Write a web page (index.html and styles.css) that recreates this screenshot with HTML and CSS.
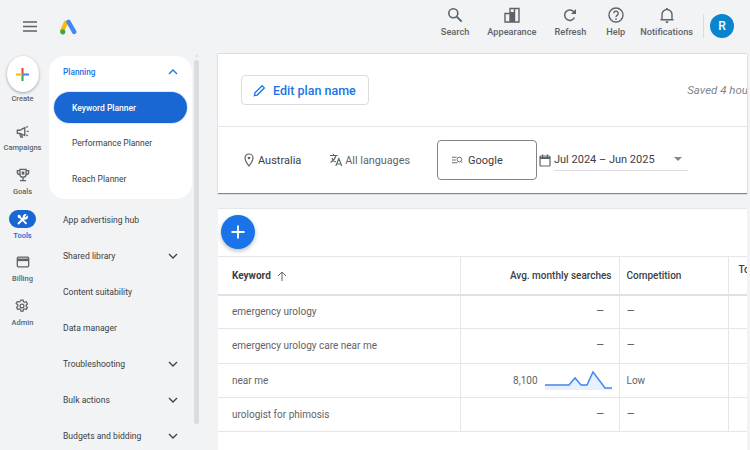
FILE: index.html
```html
<!DOCTYPE html>
<html lang="en">
<head>
<meta charset="utf-8">
<title>Keyword Planner</title>
<link rel="stylesheet" href="styles.css">
</head>
<body>
<div class="app">
  <header class="topbar">
    <div class="brand">
      <svg class="menu" viewBox="0 0 14 11" aria-hidden="true"><path d="M0 1h14M0 5.500h14M0 10h14" stroke="#5f6368" stroke-width="1.300" fill="none"/></svg>
      <svg class="logo" viewBox="0 0 20 18" aria-hidden="true">
        <path d="M7 4 2.500 13.500" stroke="#fbbc04" stroke-width="5" stroke-linecap="round"/>
        <path d="M10 3 16.700 14.700" stroke="#4285f4" stroke-width="5.200" stroke-linecap="round"/>
        <circle cx="3.300" cy="14.700" r="3" fill="#34a853"/>
      </svg>
    </div>
    <nav class="actions">
      <div class="action a-search">
        <svg viewBox="0 0 16 16" aria-hidden="true"><circle cx="6.300" cy="6.300" r="4.500" fill="none" stroke="#5f6368" stroke-width="1.600"/><path d="m9.700 9.700 5 5" stroke="#5f6368" stroke-width="1.900"/></svg>
        <span>Search</span>
      </div>
      <div class="action a-appearance">
        <svg viewBox="0 0 16 16" aria-hidden="true"><path d="M1 6.500h5v8.500H1zM6 1.500h9V15H6zM10.500 1.500V15" fill="none" stroke="#5f6368" stroke-width="1.400"/><path d="M6 5h4.500v10H6z" fill="#5f6368"/></svg>
        <span>Appearance</span>
      </div>
      <div class="action a-refresh">
        <svg viewBox="0 0 16 16" aria-hidden="true"><path d="M12.500 10.500a5.200 5.200 0 1 1-.6-5.600" fill="none" stroke="#5f6368" stroke-width="1.500"/><path d="M14 2v5H9z" fill="#5f6368"/></svg>
        <span>Refresh</span>
      </div>
      <div class="action a-help">
        <svg viewBox="0 0 16 16" aria-hidden="true"><circle cx="8" cy="8" r="7" fill="none" stroke="#5f6368" stroke-width="1.400"/><path d="M5.800 6.300a2.200 2.200 0 1 1 3.500 1.800c-.9.600-1.300 1-1.300 2" fill="none" stroke="#5f6368" stroke-width="1.400"/><path d="M7.200 11.300h1.600v1.500H7.200z" fill="#5f6368"/></svg>
        <span>Help</span>
      </div>
      <div class="action a-notify">
        <svg viewBox="0 0 16 16" aria-hidden="true"><path d="M3 12.800V7.500a5 5 0 0 1 10 0v5.300M1.500 12.800h13" fill="none" stroke="#5f6368" stroke-width="1.400"/><path d="M6.500 14.200h3v.3a1.500 1.500 0 0 1-3 0zM7.200 1h1.600v2H7.200z" fill="#5f6368"/></svg>
        <span>Notifications</span>
      </div>
      <span class="divider"></span>
      <span class="avatar">R</span>
    </nav>
  </header>

  <div class="body">
    <aside class="rail">
      <div class="create">
        <span class="create-btn">
          <svg viewBox="0 0 16 16" aria-hidden="true">
            <path d="M8 1v7" stroke="#ea4335" stroke-width="2.200"/>
            <path d="M8 8v7" stroke="#34a853" stroke-width="2.200"/>
            <path d="M1 8h7" stroke="#fbbc04" stroke-width="2.200"/>
            <path d="M8 8h7" stroke="#4285f4" stroke-width="2.200"/>
          </svg>
        </span>
        <span>Create</span>
      </div>
      <div class="rail-item r-campaigns">
        <svg viewBox="0 0 16 16" aria-hidden="true"><path d="M1.500 6h3L10 3v9L4.500 9.500h-3z" fill="none" stroke="#5f6368" stroke-width="1.500"/><path d="M4 9.500 5.500 14h1.800L6 9.800M11.800 3l1.600-1.500M12.200 7.400h2.300M11.800 11l1.600 1.300" fill="none" stroke="#5f6368" stroke-width="1.400"/></svg>
        <span>Campaigns</span>
      </div>
      <div class="rail-item r-goals">
        <svg viewBox="0 0 16 16" aria-hidden="true"><path d="M4.500 1.500h7v5.500a3.500 3.500 0 0 1-7 0zM4.500 3H1.500v1.500A3 3 0 0 0 4.500 7.500M11.500 3h3v1.500a3 3 0 0 1-3 3M8 10.500V14M4.500 14.500h7" fill="none" stroke="#5f6368" stroke-width="1.500"/><path d="M6.500 4h3v3.500h-3z" fill="#5f6368"/></svg>
        <span>Goals</span>
      </div>
      <div class="rail-item r-tools">
        <span class="pill">
          <svg viewBox="0 0 16 16" aria-hidden="true"><path d="M2.500 13.500 9.500 6.500" fill="none" stroke="#fff" stroke-width="2.400"/><path d="M8.800 7.200A3.600 3.600 0 0 1 13.300 1.800L10.800 4.300l.9.9 2.500-2.500a3.600 3.600 0 0 1-4.700 5.200z" fill="#fff"/><path d="M1.800 3.500 3.500 1.800l2.200 1.500.4 1.600 7.600 7.600-1.600 1.600-7.600-7.600-1.600-.4z" fill="#fff"/></svg>
        </span>
        <span>Tools</span>
      </div>
      <div class="rail-item r-billing">
        <svg viewBox="0 0 16 16" aria-hidden="true"><rect x="1.500" y="2.500" width="13" height="11" rx="1.200" fill="none" stroke="#5f6368" stroke-width="1.500"/><path d="M1.500 4h13v3h-13z" fill="#5f6368"/></svg>
        <span>Billing</span>
      </div>
      <div class="rail-item r-admin">
        <svg viewBox="0 0 16 16" aria-hidden="true"><path d="M6.700 1.300h2.600l.4 1.900 1.400.7 1.800-.7 1.300 2.300-1.400 1.300v1.500l1.400 1.300-1.300 2.300-1.800-.7-1.400.7-.4 1.900H6.700l-.4-1.900-1.400-.7-1.800.7-1.300-2.300 1.400-1.300V6.500L1.300 5.200l1.300-2.300 1.800.7 1.400-.7z" fill="none" stroke="#5f6368" stroke-width="1.400"/><circle cx="8" cy="8" r="2.200" fill="none" stroke="#5f6368" stroke-width="1.400"/></svg>
        <span>Admin</span>
      </div>
    </aside>

    <aside class="subnav">
      <div class="card">
        <div class="nav-row head"><span>Planning</span><svg class="chev" viewBox="0 0 10 6" aria-hidden="true"><path d="m1 5 4-4 4 4" fill="none" stroke="#1a73e8" stroke-width="1.300"/></svg></div>
        <div class="nav-row sel"><span>Keyword Planner</span></div>
        <div class="nav-row sub"><span>Performance Planner</span></div>
        <div class="nav-row sub"><span>Reach Planner</span></div>
      </div>
      <div class="nav-row top"><span>App advertising hub</span></div>
      <div class="nav-row top"><span>Shared library</span><svg class="chev" viewBox="0 0 10 6" aria-hidden="true"><path d="m1 1 4 4 4-4" fill="none" stroke="#3c4043" stroke-width="1.300"/></svg></div>
      <div class="nav-row top"><span>Content suitability</span></div>
      <div class="nav-row top"><span>Data manager</span></div>
      <div class="nav-row top"><span>Troubleshooting</span><svg class="chev" viewBox="0 0 10 6" aria-hidden="true"><path d="m1 1 4 4 4-4" fill="none" stroke="#3c4043" stroke-width="1.300"/></svg></div>
      <div class="nav-row top"><span>Bulk actions</span><svg class="chev" viewBox="0 0 10 6" aria-hidden="true"><path d="m1 1 4 4 4-4" fill="none" stroke="#3c4043" stroke-width="1.300"/></svg></div>
      <div class="nav-row top"><span>Budgets and bidding</span><svg class="chev" viewBox="0 0 10 6" aria-hidden="true"><path d="m1 1 4 4 4-4" fill="none" stroke="#3c4043" stroke-width="1.300"/></svg></div>
    </aside>

    <div class="scrollbar"><i class="arrow"></i><span class="thumb"></span></div>

    <main class="main">
      <section class="plan">
        <div class="plan-name">
          <button class="edit" type="button">
            <svg viewBox="0 0 14 14" aria-hidden="true"><path d="m1.500 12.500.6-3L9.800 1.800l2.400 2.400-7.700 7.700z" fill="none" stroke="#1a73e8" stroke-width="1.400"/></svg>
            <span>Edit plan name</span>
          </button>
          <em class="saved">Saved 4 hours ago</em>
        </div>
        <div class="filters">
          <div class="filter f-loc">
            <svg viewBox="0 0 10 14" aria-hidden="true"><path d="M5 1a4 4 0 0 1 4 4c0 3-4 8-4 8S1 8 1 5a4 4 0 0 1 4-4z" fill="none" stroke="#5f6368" stroke-width="1.200"/><circle cx="5" cy="5" r="1.300" fill="#5f6368"/></svg>
            <span>Australia</span>
          </div>
          <div class="filter f-lang">
            <svg viewBox="0 0 14 14" aria-hidden="true"><path d="M1 2.500h7.500M4.500 1v1.500M7 2.500C6 6 4 8 1.500 9.500M2.800 5c1 2 2.400 3.200 4 4M6.800 13l3-7.500 3 7.500M7.800 11h4" fill="none" stroke="#5f6368" stroke-width="1.100"/></svg>
            <span>All languages</span>
          </div>
          <div class="filter f-net">
            <svg viewBox="0 0 13 8" aria-hidden="true"><path d="M0 1h5M0 4h4M0 7h6M11 7 9.500 5.500" fill="none" stroke="#5f6368" stroke-width="1"/><circle cx="8" cy="3.500" r="2.500" fill="none" stroke="#5f6368" stroke-width="1"/></svg>
            <span>Google</span>
          </div>
          <div class="filter f-date">
            <svg viewBox="0 0 12 13" aria-hidden="true"><rect x="1" y="2" width="10" height="10" rx="1" fill="none" stroke="#5f6368" stroke-width="1.200"/><path d="M1 3h10v2H1zM3 .5h1.200V3H3zM7.800.5H9V3H7.800z" fill="#5f6368"/></svg>
            <div class="date-box"><span>Jul 2024 – Jun 2025</span><i class="caret"></i></div>
          </div>
        </div>
      </section>

      <section class="results">
        <div class="fab-row">
          <span class="fab"><svg viewBox="0 0 14 14" aria-hidden="true"><path d="M7 .5v13M.5 7h13" stroke="#fff" stroke-width="1.800"/></svg></span>
        </div>
        <table class="grid">
          <colgroup><col class="c1"><col class="c2"><col class="c3"><col class="c4"></colgroup>
          <thead>
            <tr>
              <th class="kw"><span>Keyword</span><svg viewBox="0 0 10 10" aria-hidden="true"><path d="M5 10V1M1 5l4-4 4 4" fill="none" stroke="#5f6368" stroke-width="1"/></svg></th>
              <th class="num">Avg. monthly searches</th>
              <th class="comp">Competition</th>
              <th class="tail">To</th>
            </tr>
          </thead>
          <tbody>
            <tr><td>emergency urology</td><td class="num"><span class="dash gap">–</span></td><td><span class="dash">–</span></td><td></td></tr>
            <tr><td>emergency urology care near me</td><td class="num"><span class="dash gap">–</span></td><td><span class="dash">–</span></td><td></td></tr>
            <tr>
              <td>near me</td>
              <td class="num"><div class="trend"><span>8,100</span>
                <svg viewBox="0 0 67 20" aria-hidden="true"><path d="M0 15h24l6-7 6 7h6l6-13 12 16h7v2H0z" fill="#e8f0fe"/><path d="M0 15h24l6-7 6 7h6l6-13 12 16h7" fill="none" stroke="#4285f4" stroke-width="1.500"/></svg></div></td>
              <td>Low</td><td></td>
            </tr>
            <tr><td>urologist for phimosis</td><td class="num"><span class="dash gap">–</span></td><td><span class="dash">–</span></td><td></td></tr>
          </tbody>
        </table>
      </section>
    </main>
  </div>
</div>
</body>
</html>
```

FILE: styles.css
```css
* { box-sizing: border-box; }
html, body { margin: 0; height: 100%; }
body {
  width: 750px;
  height: 450px;
  overflow: hidden;
  background: #f1f3f5;
  font-family: Roboto, "Liberation Sans", sans-serif;
  color: #3c4043;
}
.app { width: 750px; height: 450px; display: flex; flex-direction: column; overflow: hidden; }

.topbar { height: 53px; flex: none; display: flex; justify-content: space-between; padding-right: 16px; }
.brand { display: flex; align-items: center; padding: 0 0 0 23px; gap: 23px; height: 53px; }
.menu { width: 14px; height: 11px; margin-top: -1px; }
.logo { width: 17px; height: 16px; margin-top: 1px; }
.actions { display: flex; align-items: flex-start; padding-top: 7px; }
.action { display: flex; flex-direction: column; align-items: center; font-size: 9.200px; line-height: 12px; color: #5f6368; font-weight: 500; white-space: nowrap; }
.action svg { width: 16px; height: 16px; margin-bottom: 3px; }
.a-search { margin-right: 18px; }
.a-appearance { margin-right: 18px; }
.a-refresh { margin-right: 20px; }
.a-help { margin-right: 15px; }
.divider { width: 1px; height: 24px; background: #dadce0; margin: 7px 0 0 10px; }
.avatar { width: 24px; height: 24px; margin: 7px 0 0 6px; border-radius: 50%; background: #0b84cf; color: #fff; font-size: 12px; font-weight: 500; display: flex; align-items: center; justify-content: center; }

.body { flex: 1; display: flex; min-height: 0; }
.rail { width: 45px; flex: none; display: flex; flex-direction: column; align-items: center; padding-top: 3px; }
.create { display: flex; flex-direction: column; align-items: center; font-size: 7.500px; line-height: 10px; color: #5f6368; font-weight: 500; }
.create-btn { width: 32px; height: 36px; border-radius: 50%; background: #fff; box-shadow: 0 1px 3px rgba(60,64,67,.45); display: flex; align-items: center; justify-content: center; margin-bottom: 2px; }
.create-btn svg { width: 15px; height: 15px; }
.rail-item { display: flex; flex-direction: column; align-items: center; font-size: 7.500px; line-height: 10px; color: #5f6368; font-weight: 500; }
.rail-item svg { width: 14px; height: 14px; margin-bottom: 5px; }
.r-campaigns { margin-top: 21px; }
.r-campaigns svg { margin-bottom: 4px; }
.r-goals { margin-top: 15px; }
.r-tools { margin-top: 13px; color: #1967d2; }
.r-billing { margin-top: 14px; }
.r-admin { margin-top: 15px; }
.pill { width: 27px; height: 18px; border-radius: 9px; background: #1967d2; display: flex; align-items: center; justify-content: center; margin-bottom: 3px; }
.pill svg { width: 13px; height: 13px; margin: 0; }

.subnav { width: 143px; flex: none; margin-left: 4px; padding-top: 3px; overflow: hidden; font-size: 8.600px; }
.card { background: #fff; border-radius: 16px; height: 143px; padding: 0 5px; margin-bottom: 2.500px; font-size: 8.500px; }
.nav-row { height: 36px; display: flex; align-items: center; justify-content: space-between; white-space: nowrap; }
.chev { width: 10px; height: 6px; flex: none; }
.head { padding: 0 9px; color: #1a73e8; font-weight: 500; height: 32px; font-size: 8.300px; }
.sel { height: 31px; margin-top: 4px; background: #1967d2; color: #fff; border-radius: 16px; padding-left: 18px; font-weight: 500; box-shadow: 0 0 0 1px rgba(25,103,210,.15); }
.sub { padding-left: 18px; color: #3c4043; }
.sel + .sub { margin-top: 2px; }
.top { padding: 0 14px; color: #3c4043; }

.scrollbar { width: 5px; flex: none; margin-left: 2px; display: flex; flex-direction: column; align-items: center; }
.arrow { width: 0; height: 0; margin-top: 1px; border-left: 2.500px solid transparent; border-right: 2.500px solid transparent; border-bottom: 3px solid #e0e2e5; }
.thumb { display: block; width: 5px; height: 364px; margin-top: 3px; background: #dadce0; border-radius: 3px; }

.main { width: 529px; flex: none; margin-left: 19px; display: flex; flex-direction: column; gap: 15px; min-height: 0; }
.plan { background: #fff; flex: none; box-shadow: 0 1px 1px rgba(60,64,67,.6); border-top: 1px solid #dadce0; }
.plan-name { height: 73px; border-bottom: 1px solid #e4e6e9; display: flex; align-items: center; justify-content: space-between; padding: 0 0 0 23px; overflow: hidden; }
.edit { height: 30px; width: 128px; display: flex; align-items: center; gap: 7px; border: 1px solid #dadce0; border-radius: 4px; background: #fff; padding: 0 0 0 11px; font-family: inherit; font-size: 12.500px; font-weight: 500; color: #1a73e8; }
.edit svg { width: 13px; height: 13px; }
.saved { font-size: 11.500px; color: #80868b; white-space: nowrap; margin-right: -32px; }
.filters { height: 66px; display: flex; align-items: center; padding-left: 26px; overflow: hidden; }
.filter { display: flex; align-items: center; font-size: 11px; white-space: nowrap; }
.f-loc { gap: 4px; }
.f-loc svg { width: 10px; height: 14px; }
.f-lang { gap: 2px; margin-left: 28px; color: #5f6368; font-size: 10.800px; }
.f-lang svg { width: 14px; height: 14px; }
.f-net { width: 100px; height: 40px; margin-left: 27px; border: 1px solid #80868b; border-radius: 4px; padding-left: 14px; gap: 4px; }
.f-net svg { width: 12px; height: 8px; }
.f-date { margin-left: 2px; gap: 3px; }
.f-date svg { width: 12px; height: 13px; }
.date-box { width: 134px; height: 21px; border-bottom: 1px solid #dadce0; display: flex; align-items: center; justify-content: space-between; padding: 0 6px 1px 0; }
.caret { width: 0; height: 0; border-left: 4.500px solid transparent; border-right: 4.500px solid transparent; border-top: 4.500px solid #80868b; }

.results { background: #fff; flex: 1; border-top: 1px solid #e4e6e9; overflow: hidden; }
.fab-row { height: 47px; padding: 6px 0 0 3px; }
.fab { width: 34px; height: 34px; border-radius: 50%; background: #1a73e8; display: flex; align-items: center; justify-content: center; box-shadow: 0 2px 4px rgba(60,64,67,.35); }
.fab svg { width: 14px; height: 14px; }
.grid { border-collapse: collapse; table-layout: fixed; width: 530px; font-size: 10px; }
.c1 { width: 242px; } .c2 { width: 159px; } .c3 { width: 109px; } .c4 { width: 20px; }
.grid th, .grid td { padding: 0 7px; border-right: 1px solid #e4e6e9; border-bottom: 1px solid #e4e6e9; font-weight: 400; text-align: left; height: 34.300px; white-space: nowrap; overflow: hidden; }
.grid thead tr { border-top: 1px solid #e4e6e9; }
.grid th { height: 38px; border-bottom: 2px solid #dfe1e5; font-weight: 500; color: #3c4043; }
.grid .kw, .grid td:first-child { padding-left: 14px; }
.grid td { color: #5f6368; }
.kw { font-weight: 700 !important; }
.kw svg { width: 10px; height: 10px; margin-left: 6px; vertical-align: -2px; }
.grid .num { text-align: right; padding-right: 7px; }
.grid .tail { vertical-align: top; padding-top: 7px; padding-left: 10px; padding-right: 0; }
.dash { font-size: 13px; line-height: 10px; }
.gap { margin-right: 7px; }
.trend { display: flex; justify-content: flex-end; align-items: center; gap: 7px; }
.trend svg { width: 67px; height: 20px; }
```
